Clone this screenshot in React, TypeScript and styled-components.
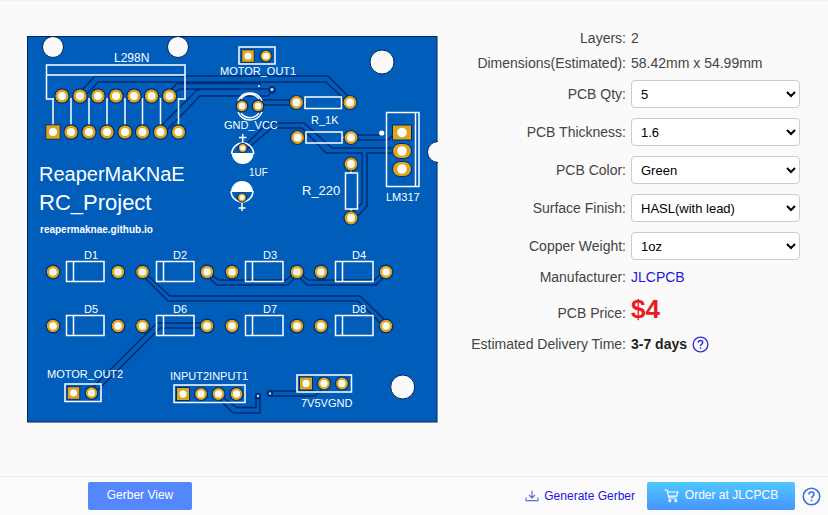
import React, { useState } from "react";
import styled, { createGlobalStyle } from "styled-components";

const GlobalStyle = createGlobalStyle`
  * { box-sizing: border-box; }
  body {
    margin: 0;
    background: #fafafa;
    color: #444;
    font-family: "Liberation Sans", Arial, sans-serif;
    font-size: 14px;
  }
`;

const Page = styled.div`
  display: flex;
  flex-direction: column;
  min-height: 100vh;
  border-top: 1px solid #f2f2f2;
`;

const Content = styled.main`
  flex: 1;
  display: grid;
  grid-template-columns: minmax(0, 412fr) minmax(0, 329fr);
  column-gap: 33px;
  align-items: start;
  padding: 24px 28px 24px 26px;
`;

const Board = styled.svg`
  display: block;
  width: 100%;
  height: auto;
  margin-top: 10px;
`;

const Silk = styled.text<{ $size?: number; $bold?: boolean }>`
  fill: #fff;
  font-family: "Liberation Sans", Arial, sans-serif;
  font-size: ${(p) => p.$size ?? 11}px;
  font-weight: ${(p) => (p.$bold ? 700 : 400)};
`;

const Form = styled.form`
  display: flex;
  flex-direction: column;
`;

const Row = styled.div<{ $height: number; $baseline?: boolean }>`
  display: grid;
  grid-template-columns: 155px minmax(0, 1fr);
  column-gap: 5px;
  align-items: ${(p) => (p.$baseline ? "baseline" : "center")};
  min-height: ${(p) => p.$height}px;
`;

const labelCss = `
  text-align: right;
  white-space: nowrap;
`;
const Label = styled.label`${labelCss}`;
const Term = styled.span`${labelCss}`;

const Value = styled.span`
  display: flex;
  align-items: center;
  gap: 5px;
  white-space: nowrap;
`;

const Price = styled.strong`
  color: #e81c24;
  font-size: 26px;
  line-height: 40px;
`;

const Delivery = styled.strong`
  color: #222;
`;

const Select = styled.select`
  width: 100%;
  height: 28px;
  padding: 0 0 0 5px;
  border: 1px solid #ccc;
  border-radius: 4px;
  background: #fff;
  color: #000;
  font-family: inherit;
  font-size: 13px;
`;

const Link = styled.a`
  color: #2414e0;
  text-decoration: none;
`;

const HelpLink = styled.a`
  display: flex;
  color: #3430e0;
`;

const Footer = styled.footer`
  display: flex;
  align-items: center;
  justify-content: space-between;
  height: 39px;
  padding: 0 7px 0 88px;
  border-top: 1px solid #eaeaea;
  background: #fbfbfb;
  font-size: 12px;
`;

const Actions = styled.div`
  display: flex;
  align-items: center;
`;

const Button = styled.button<{ $primary?: boolean }>`
  display: flex;
  align-items: center;
  justify-content: center;
  gap: 6px;
  width: ${(p) => (p.$primary ? 148 : 104)}px;
  height: 28px;
  padding: 0 0 2px;
  border: 0;
  border-radius: 2px;
  background: ${(p) => (p.$primary ? "linear-gradient(#50c8ff, #4594ff)" : "#5588ff")};
  color: #fff;
  font-family: inherit;
  font-size: 12px;
`;

const DownloadLink = styled(Link)`
  display: flex;
  align-items: center;
  gap: 5px;
  margin-right: 12px;
`;

const FooterHelp = styled(HelpLink)`
  margin-left: 7px;
  color: #3a6fe0;
`;

const HelpIcon = ({ size }: { size: number }) => (
  <svg width={size} height={size} viewBox="0 0 18 18" fill="none" stroke="currentColor" strokeWidth="1.5" aria-hidden="true">
    <circle cx="9" cy="9" r="7.8" />
    <path d="M6.6 7.2C6.6 5.6 7.6 4.8 9 4.8S11.4 5.7 11.4 7C11.4 8.6 9 8.7 9 10.6M9 12V13.6" />
  </svg>
);

const DownloadIcon = () => (
  <svg width="14" height="14" viewBox="0 0 14 14" fill="none" stroke="#5870e0" strokeWidth="1.2" aria-hidden="true">
    <path d="M7 1.5V8.5M4 6L7 9L10 6M1 8.5V11.7H13V8.5" />
  </svg>
);

const CartIcon = () => (
  <svg width="15" height="15" viewBox="0 0 15 15" fill="none" stroke="#fff" strokeWidth="1.2" aria-hidden="true">
    <path d="M0.5 2H3L5 10H12.5M3.6 4H13.8L12.6 8.2H4.6" />
    <circle cx="5.8" cy="12.6" r="1" />
    <circle cx="11.8" cy="12.6" r="1" />
  </svg>
);

const NAVY = "#002b70";
const GOLD = "#dda51a";
const PAPER = "#fafafa";

type PadProps = { x: number; y: number; square?: boolean; r?: number };
const Pad = ({ x, y, square, r = 6.3 }: PadProps) => (
  <g>
    {square ? (
      <rect x={x - r} y={y - r} width={r * 2} height={r * 2} fill={GOLD} stroke={NAVY} />
    ) : (
      <circle cx={x} cy={y} r={r} fill={GOLD} stroke={NAVY} strokeWidth="1.2" />
    )}
    <circle cx={x} cy={y} r={r * 0.56} fill={PAPER} />
  </g>
);

const traces = [
  "M80 92L95 76H328L350 98",
  "M87 94L98 82H326L344 99",
  "M170 91L177 83.500H260V86",
  "M172 94L180 89H268",
  "M162 125L197 90H200",
  "M168 129L200 96H268L273 91",
  "M262 100H292M262 105H292",
  "M241 149L268 123H304L332 148H392",
  "M247 149L272 128H302L326 153H362V203L354 211",
  "M392 153H367V206L358 216",
  "M357 135H381M357 140H388L393 135",
  "M211 275L219 280H286L294 273",
  "M207 276L217 285H288L297 275",
  "M300 273L308 280H374L382 273",
  "M299 277L307 285H376L386 275",
  "M146 274L170 296H360L386 321",
  "M143 276L168 301H358L382 325",
  "M202 323H157L90 390",
  "M203 328H160L98 390",
  "M221 396L237 407.500H256V397",
  "M217 397L233 413H260V397",
  "M271 391H316M271 396H315L322 389",
];

const topPins = [62, 80, 98, 116, 134, 151.5, 169.5];
const bottomPins = [53, 71, 89, 107, 125, 142.5, 160.5, 178.5];
const diodeX = [66.5, 156.5, 245.5, 335.5];
const diodePads = [53, 118, 142.5, 207, 232, 297, 321, 386];

const PcbPreview = () => (
  <Board viewBox="26 35 412 389" role="img" aria-label="PCB preview">
    <rect x="27.500" y="36.500" width="409.500" height="385.500" fill="#005db9" stroke="#00245f" />
    <g fill="none" stroke={NAVY} strokeWidth="1.500">
      {traces.map((d) => <path key={d} d={d} />)}
      <circle cx="272" cy="90" r="3" />
      <circle cx="258" cy="396" r="2.500" />
      <circle cx="270" cy="393.500" r="2.500" />
    </g>
    <g fill={PAPER} stroke="#00245f">
      <circle cx="53" cy="47" r="10.500" />
      <circle cx="178" cy="47" r="10.500" />
      <circle cx="382" cy="62" r="12" />
      <circle cx="402.700" cy="387" r="12" />
      <path d="M438 141.500A10.500 10.500 0 0 0 438 162.500" />
    </g>
    <g fill="#fff">
      <circle cx="259" cy="86" r="1" />
      <circle cx="272" cy="89.500" r="1.300" />
      <circle cx="258" cy="396" r="1" />
      <circle cx="270" cy="393.500" r="1" />
      <circle cx="381.700" cy="133" r="2.600" />
      <path d="M231.700 153H253.700A11 11 0 0 1 231.700 153Z" />
      <path d="M231 192H253A11 11 0 0 0 231 192Z" />
    </g>
    <g fill="none" stroke="#fff" strokeWidth="1.500">
      <path d="M54 99H46.500V65H185V99H178M46.500 75H185" />
      {bottomPins.map((x) => <path key={x} d={`M${x} 98V128`} />)}
      <rect x="239" y="47" width="36" height="17" />
      <path d="M238 101A13 13 0 0 1 262 101M238 112A13 13 0 0 0 262 112M241 99A11 11 0 0 1 259 99M241 113A11 11 0 0 0 259 113" />
      <rect x="305" y="97" width="36.500" height="11.500" />
      <path d="M301 102.500H305M342 102.500H346M302 137.500H306M342 137.500H346M351 168V173M351 209V213" />
      <rect x="306" y="132" width="36" height="11" />
      <rect x="345.500" y="173" width="12" height="36" />
      <rect x="386.500" y="112.500" width="32.500" height="74" />
      <path d="M415.500 113V187" />
      <path d="M231.700 154A11 11 0 0 1 253.700 154M231 191A11 11 0 0 0 253 191M242.700 134V143M239 137.500H246.400M242 203V211M238.500 208H245.500" />
      {[261.5, 315.5].map((y) => diodeX.map((x) => (
        <path key={`${x}-${y}`} d={`M${x} ${y}h37.500v20h-37.500zM${x + 7} ${y}v20`} />
      )))}
      <rect x="65" y="384" width="36" height="17.500" />
      <rect x="174" y="385" width="71" height="17.500" />
      <rect x="297" y="375" width="54.500" height="17" />
    </g>

    {topPins.map((x) => <Pad key={x} x={x} y={96} r={7.200} />)}
    {bottomPins.map((x, i) => <Pad key={x} x={x} y={132} r={7.2} square={i === 0} />)}
    <Pad x={248} y={56} r={6.3} square />
    <Pad x={266} y={56} r={6} />
    <Pad x={242} y={106} r={5.8} />
    <Pad x={258} y={106} r={5.8} />
    <Pad x={296.5} y={102.5} r={7} />
    <Pad x={350} y={102.5} r={7} />
    <Pad x={297.5} y={137.5} r={7} />
    <Pad x={351} y={137.5} r={7} />
    <Pad x={351} y={164} r={7} />
    <Pad x={351} y={218} r={7} />
    <Pad x={242.7} y={148} r={4.5} />
    <Pad x={242} y={197.5} r={4.5} />
    <g fill={GOLD} stroke={NAVY}>
      <rect x="392.500" y="125" width="19" height="15" />
      <rect x="392.500" y="143.500" width="19" height="15" rx="7.500" />
      <rect x="392.500" y="161.500" width="19" height="15" rx="7.500" />
    </g>
    <g fill={PAPER}>
      {[132.5, 151, 169].map((y) => <circle key={y} cx="402" cy={y} r="4.800" />)}
    </g>
    {[272, 326].map((y) => diodePads.map((x) => <Pad key={`${x}-${y}`} x={x} y={y} r={6.800} />))}
    <Pad x={73.5} y={393} square />
    <Pad x={91.5} y={393} />
    {[183, 201, 218.5, 236.5].map((x, i) => <Pad key={x} x={x} y={394} square={i === 0} r={6.5} />)}
    {[306, 324, 342].map((x, i) => <Pad key={x} x={x} y={383.500} square={i === 0} r={6.5} />)}

    <Silk x="114" y="62" $size={12}>L298N</Silk>
    <Silk x="220" y="75">MOTOR_OUT1</Silk>
    <Silk x="224" y="129">GND_VCC</Silk>
    <Silk x="311" y="124">R_1K</Silk>
    <Silk x="249" y="176" $size={10}>1UF</Silk>
    <Silk x="302" y="195" $size={13}>R_220</Silk>
    <Silk x="386" y="201">LM317</Silk>
    <Silk x="39" y="181" $size={20}>ReaperMaKNaE</Silk>
    <Silk x="39" y="210" $size={22}>RC_Project</Silk>
    <Silk x="40" y="233" $size={10} $bold>reapermaknae.github.io</Silk>
    {[84, 173, 263, 352].map((x, i) => <Silk key={x} x={x} y="259">{`D${i + 1}`}</Silk>)}
    {[84, 173, 263, 352].map((x, i) => <Silk key={x} x={x} y="313">{`D${i + 5}`}</Silk>)}
    <Silk x="47" y="378">MOTOR_OUT2</Silk>
    <Silk x="170" y="380">INPUT2INPUT1</Silk>
    <Silk x="301" y="407">7V5VGND</Silk>
  </Board>
);

const fields = [
  { id: "qty", label: "PCB Qty:", options: ["5", "10", "15", "20"] },
  { id: "thickness", label: "PCB Thickness:", options: ["1.6", "1.2", "1.0", "0.8"] },
  { id: "color", label: "PCB Color:", options: ["Green", "Red", "Blue", "Black"] },
  { id: "finish", label: "Surface Finish:", options: ["HASL(with lead)", "LeadFree HASL", "ENIG"] },
  { id: "copper", label: "Copper Weight:", options: ["1oz", "2oz"] },
];

export default function App() {
  const [values, setValues] = useState<Record<string, string>>(
    Object.fromEntries(fields.map((f) => [f.id, f.options[0]]))
  );
  return (
    <>
      <GlobalStyle />
      <Page>
        <Content>
          <PcbPreview />
          <Form>
            <Row $height={26}><Term>Layers:</Term><Value>2</Value></Row>
            <Row $height={24}><Term>Dimensions(Estimated):</Term><Value>58.42mm x 54.99mm</Value></Row>
            {fields.map((f) => (
              <Row key={f.id} $height={38}>
                <Label htmlFor={f.id}>{f.label}</Label>
                <Select
                  id={f.id}
                  value={values[f.id]}
                  onChange={(e) => setValues({ ...values, [f.id]: e.target.value })}
                >
                  {f.options.map((o) => <option key={o}>{o}</option>)}
                </Select>
              </Row>
            ))}
            <Row $height={24}><Term>Manufacturer:</Term><Value><Link href="#jlcpcb">JLCPCB</Link></Value></Row>
            <Row $height={42} $baseline><Term>PCB Price:</Term><Price>$4</Price></Row>
            <Row $height={26}>
              <Term>Estimated Delivery Time:</Term>
              <Value>
                <Delivery>3-7 days</Delivery>
                <HelpLink href="#delivery" aria-label="Delivery time help"><HelpIcon size={17} /></HelpLink>
              </Value>
            </Row>
          </Form>
        </Content>
        <Footer>
          <Button type="button">Gerber View</Button>
          <Actions>
            <DownloadLink href="#gerber"><DownloadIcon />Generate Gerber</DownloadLink>
            <Button type="button" $primary><CartIcon />Order at JLCPCB</Button>
            <FooterHelp href="#help" aria-label="Order help"><HelpIcon size={19} /></FooterHelp>
          </Actions>
        </Footer>
      </Page>
    </>
  );
}
